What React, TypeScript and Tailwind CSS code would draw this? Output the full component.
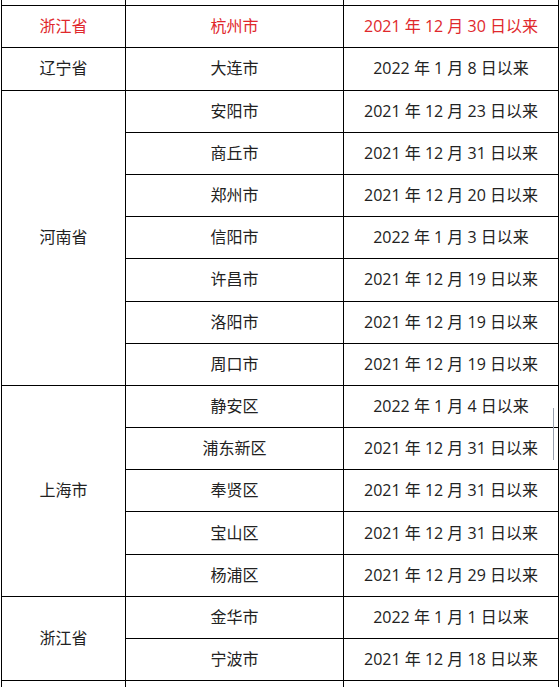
import React from "react";

interface Row {
  province?: string;
  span?: number;
  city: string;
  date: string;
  red?: boolean;
}

const rows: Row[] = [
  { province: "浙江省", span: 1, city: "杭州市", date: "2021 年 12 月 30 日以来", red: true },
  { province: "辽宁省", span: 1, city: "大连市", date: "2022 年 1 月 8 日以来" },
  { province: "河南省", span: 7, city: "安阳市", date: "2021 年 12 月 23 日以来" },
  { city: "商丘市", date: "2021 年 12 月 31 日以来" },
  { city: "郑州市", date: "2021 年 12 月 20 日以来" },
  { city: "信阳市", date: "2022 年 1 月 3 日以来" },
  { city: "许昌市", date: "2021 年 12 月 19 日以来" },
  { city: "洛阳市", date: "2021 年 12 月 19 日以来" },
  { city: "周口市", date: "2021 年 12 月 19 日以来" },
  { province: "上海市", span: 5, city: "静安区", date: "2022 年 1 月 4 日以来" },
  { city: "浦东新区", date: "2021 年 12 月 31 日以来" },
  { city: "奉贤区", date: "2021 年 12 月 31 日以来" },
  { city: "宝山区", date: "2021 年 12 月 31 日以来" },
  { city: "杨浦区", date: "2021 年 12 月 29 日以来" },
  { province: "浙江省", span: 2, city: "金华市", date: "2022 年 1 月 1 日以来" },
  { city: "宁波市", date: "2021 年 12 月 18 日以来" },
];

const cell = "border border-black text-center align-middle p-0 pb-[1px] leading-[20px]";

export default function App() {
  return (
    <div className="relative h-[687px] w-[560px] overflow-hidden bg-white">
      <table
        className="ml-[1px] mt-[-37px] w-[557px] table-fixed border-collapse text-[16px] text-[#222]"
        style={{ fontFamily: '"Open Sans", "Noto Sans CJK SC", sans-serif' }}
      >
        <colgroup>
          <col className="w-[124px]" />
          <col className="w-[218px]" />
          <col className="w-[215px]" />
        </colgroup>
        <tbody>
          <tr className="h-[42.2px]">
            <td className={cell} />
            <td className={cell} />
            <td className={cell} />
          </tr>
          {rows.map((r, i) => (
            <tr key={i} className={`h-[42.2px] ${r.red ? "text-[#e0282c]" : ""}`}>
              {r.province && (
                <td className={cell} rowSpan={r.span}>
                  {r.province}
                </td>
              )}
              <td className={cell}>{r.city}</td>
              <td className={cell}>{r.date}</td>
            </tr>
          ))}
          <tr className="h-[42.2px]">
            <td className={cell} />
            <td className={cell} />
            <td className={cell} />
          </tr>
        </tbody>
      </table>
      <div className="absolute left-[553px] top-[408px] h-[52px] w-[1px] bg-gray-400" />
    </div>
  );
}
